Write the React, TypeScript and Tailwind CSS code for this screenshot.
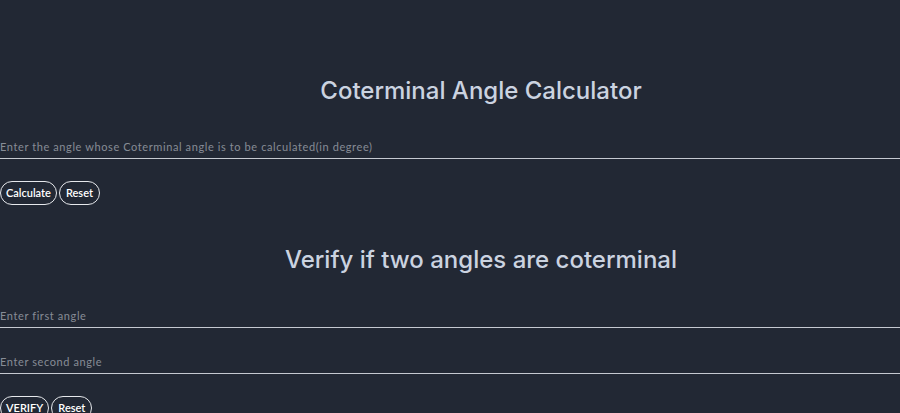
import React from "react";

export default function App() {
  return (
    <div className="min-h-[413px] w-full bg-[#222834] overflow-hidden" style={{ fontFamily: "Lato, 'Open Sans', sans-serif" }}>
      <h1 className="pt-[75px] pl-[62px] text-center text-[24px] leading-[32px] font-medium text-[#cbd3e0]" style={{ fontFamily: "Inter, sans-serif" }}>
        Coterminal Angle Calculator
      </h1>
      <div className="mt-[29px]">
        <input
          className="block w-full h-[23px] pb-[2px] bg-transparent border-b border-[#c5c9d0] text-[11px] tracking-[0.6px] text-white placeholder:text-[#878c96] outline-none"
          placeholder="Enter the angle whose Coterminal angle is to be calculated(in degree)"
        />
      </div>
      <div className="mt-[22px] flex gap-[2px]">
        <button className="h-[24px] px-[5px] rounded-full border border-[#e6e8ec] text-white text-[11px] font-semibold">Calculate</button>
        <button className="h-[24px] px-[6px] rounded-full border border-[#e6e8ec] text-white text-[11px] font-semibold">Reset</button>
      </div>
      <h2 className="mt-[39px] pl-[62px] text-center text-[24px] leading-[32px] font-medium text-[#cbd3e0]" style={{ fontFamily: "Inter, sans-serif" }}>
        Verify if two angles are coterminal
      </h2>
      <div className="mt-[29px]">
        <input
          className="block w-full h-[23px] pb-[2px] bg-transparent border-b border-[#c5c9d0] text-[11px] tracking-[0.6px] text-white placeholder:text-[#878c96] outline-none"
          placeholder="Enter first angle"
        />
      </div>
      <div className="mt-[23px]">
        <input
          className="block w-full h-[23px] pb-[2px] bg-transparent border-b border-[#c5c9d0] text-[11px] tracking-[0.6px] text-white placeholder:text-[#878c96] outline-none"
          placeholder="Enter second angle"
        />
      </div>
      <div className="mt-[22px] flex gap-[2px]">
        <button className="h-[24px] px-[5px] rounded-full border border-[#e6e8ec] text-white text-[11px] font-semibold">VERIFY</button>
        <button className="h-[24px] px-[6px] rounded-full border border-[#e6e8ec] text-white text-[11px] font-semibold">Reset</button>
      </div>
    </div>
  );
}
